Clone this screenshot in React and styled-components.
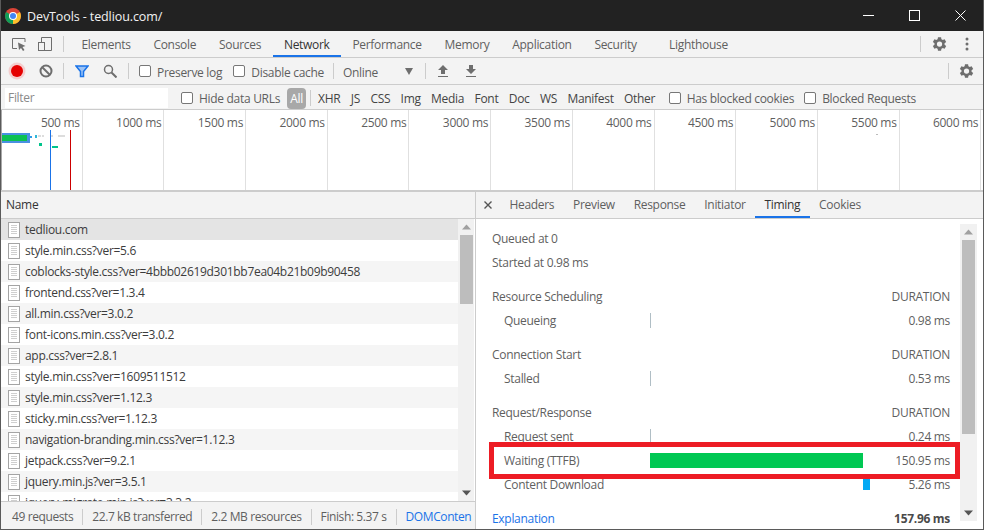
import React from 'react';
import styled, { createGlobalStyle } from 'styled-components';

const GlobalStyle = createGlobalStyle`
  html, body {
    margin: 0;
    padding: 0;
    background: #fff;
  }
  * {
    box-sizing: border-box;
  }
`;

const Win = styled.div`
  position: relative;
  width: 984px;
  height: 530px;
  overflow: hidden;
  display: flex;
  flex-direction: column;
  background: #f3f3f3;
  border: 1px solid #5a5a5a;
  border-top: none;
  font-family: "Open Sans", "Noto Sans", sans-serif;
  font-size: 12px;
  letter-spacing: -0.3px;
  color: #5f5f5f;
`;

const TitleBar = styled.div`
  height: 31px;
  flex: none;
  margin: 0 -1px;
  padding: 0 1px 0 5px;
  display: flex;
  align-items: center;
  background: #222;
  color: #f2f2f2;
  font-size: 12.5px;
  letter-spacing: -0.1px;
`;

const TitleText = styled.span`
  margin-left: 6px;
  padding-top: 2px;
  flex: 1;
`;

const WinBtn = styled.button`
  width: 46px;
  height: 31px;
  padding: 0;
  border: none;
  background: none;
  display: flex;
  align-items: center;
  justify-content: center;
`;

const Bar = styled.div`
  height: ${p => p.$h}px;
  padding-top: ${p => p.$pt || 0}px;
  flex: none;
  display: flex;
  align-items: center;
  border-bottom: 1px solid #ccc;
  background: #f3f3f3;
`;

const Sep = styled.div`
  width: 1px;
  height: 16px;
  flex: none;
  margin: 0 ${p => p.$r || 0}px 0 ${p => p.$l || 0}px;
  background: #ccc;
`;

const IconBtn = styled.span`
  width: ${p => p.$w || 26}px;
  height: 26px;
  flex: none;
  display: flex;
  align-items: center;
  justify-content: center;
`;

const Tab = styled.div`
  height: 26px;
  padding: 0 ${p => p.$px}px;
  margin-left: ${p => p.$ml || 0}px;
  line-height: ${p => p.$lh}px;
  white-space: nowrap;
  box-shadow: ${p => (p.$active ? 'inset 0 -2px 0 #1a73e8' : 'none')};
  color: ${p => (p.$active ? '#333' : '#5f5f5f')};
`;

const Spring = styled.div`
  flex: 1;
`;

const EndGap = styled.div`
  width: 6px;
  flex: none;
`;

const Check = styled.label`
  display: flex;
  align-items: center;
  gap: 6px;
  white-space: nowrap;
  margin-left: ${p => p.$ml || 0}px;
`;

const CheckText = styled.span`
  padding-top: ${p => (p.$low ? 2 : 0)}px;
`;

const Box = styled.span`
  width: 12px;
  height: 12px;
  flex: none;
  border: 1px solid #777;
  border-radius: 2px;
  background: #fff;
`;

const ThrottleText = styled.span`
  width: 62px;
  padding-top: 2px;
`;

const FilterInput = styled.div`
  width: 163px;
  height: 20px;
  margin-left: 4px;
  padding-left: 3px;
  line-height: 20px;
  background: #fff;
  color: #8a8a8a;
`;

const AllPill = styled.span`
  width: 19px;
  height: 21px;
  margin-left: 7px;
  border-radius: 4px;
  background: #a8a8a8;
  color: #fff;
  line-height: 21px;
  text-align: center;
`;

const TypeList = styled.div`
  display: flex;
  gap: 10.4px;
  margin-left: 3px;
  white-space: nowrap;
  color: #444;
`;

const Overview = styled.div`
  position: relative;
  height: 80px;
  flex: none;
  display: grid;
  grid-template-columns: repeat(12, 81.7px);
  background: #fff;
`;

const Tick = styled.div`
  padding: 4px 2px 0 0;
  text-align: right;
  white-space: nowrap;
  border-right: 1px solid #e0e0e0;
`;

const OverviewMarks = styled.svg`
  position: absolute;
  left: 0;
  top: 0;
`;

const Split = styled.div`
  flex: 1;
  min-height: 0;
  display: flex;
  border-top: 2px solid #ccc;
`;

const ListPane = styled.div`
  width: 475px;
  flex: none;
  display: flex;
  flex-direction: column;
  border-right: 1px solid #ccc;
`;

const NameHead = styled.div`
  height: 27px;
  flex: none;
  padding-left: 5px;
  line-height: 26px;
  color: #333;
  border-bottom: 1px solid #ccc;
`;

const ListBody = styled.div`
  flex: 1;
  min-height: 0;
  display: flex;
  overflow: hidden;
  background: #fff;
  padding-right: 1px;
`;

const Rows = styled.div`
  flex: 1;
  min-width: 0;
  overflow: hidden;
`;

const Row = styled.div`
  height: 21px;
  display: flex;
  align-items: center;
  gap: 5px;
  padding-left: 7px;
  color: #3c3c3c;
  background: ${p => (p.$selected ? '#e4e4e4' : p.$odd ? '#f5f5f5' : '#fff')};
  white-space: nowrap;
`;

const Track = styled.div`
  width: ${p => (p.$inset ? 17 : 16)}px;
  flex: none;
  margin: ${p => (p.$inset ? '5px 0 8px' : '0')};
  display: flex;
  flex-direction: column;
  align-items: center;
  background: #f1f1f1;
`;

const ArrowBox = styled.div`
  height: 16px;
  flex: none;
  display: flex;
  align-items: center;
  justify-content: center;
`;

const Thumb = styled.div`
  width: 13px;
  flex: none;
  height: ${p => p.$h}px;
  background: #bdbdbd;
`;

const TrackGap = styled.div`
  flex: 1;
`;

const StatusBar = styled.div`
  height: 28px;
  flex: none;
  padding: 2px 0 0 2px;
  display: flex;
  align-items: center;
  border-top: 1px solid #ccc;
  white-space: nowrap;
  overflow: hidden;
  letter-spacing: -0.4px;
`;

const StatusItem = styled.span`
  padding: 0 9px;
  border-right: ${p => (p.$link ? 'none' : '1px solid #ccc')};
  color: ${p => (p.$link ? '#1a73e8' : '#5f5f5f')};
  line-height: 16px;
`;

const DetailPane = styled.div`
  flex: 1;
  min-width: 0;
  display: flex;
  flex-direction: column;
`;

const DetailTabs = styled.div`
  height: 27px;
  flex: none;
  display: flex;
  align-items: center;
  border-bottom: 1px solid #ccc;
`;

const DetailBody = styled.div`
  flex: 1;
  min-height: 0;
  display: flex;
  background: #fff;
  padding-right: 6px;
`;

const TimingPane = styled.div`
  flex: 1;
  min-width: 0;
  padding: 7px 10px 0 16px;
  overflow: hidden;
`;

const Line = styled.div`
  height: 24px;
  margin-top: ${p => p.$mt || 0}px;
  display: flex;
  align-items: center;
  white-space: nowrap;
`;

const Label = styled.span`
  flex: 1;
  color: ${p => p.$color || 'inherit'};
`;

const Total = styled.strong`
  color: #4a4a4a;
`;

const Grid = styled.div`
  height: 24px;
  display: grid;
  grid-template-columns: 158px 1fr 80px;
  align-items: center;
  white-space: nowrap;
`;

const RowName = styled.span`
  padding-left: 12px;
`;

const Ms = styled.span`
  text-align: right;
`;

const BarCell = styled.div`
  height: ${p => p.$h || 15}px;
  display: flex;
`;

const Segment = styled.div`
  height: 100%;
  width: ${p => p.$w}px;
  margin-left: ${p => p.$ml || 0}px;
  background: ${p => p.$c};
`;

const Highlight = styled.div`
  position: absolute;
  left: 488px;
  top: 442px;
  width: 471px;
  height: 37px;
  border: 5px solid #ed1c24;
`;

const ChromeLogo = () => (
  <svg width="16" height="16" viewBox="0 0 16 16">
    <circle cx="8" cy="8" r="8" fill="#db4437" />
    <path d="M8 8 L14.9 4 A8 8 0 0 1 8 16 Z" fill="#fbc02d" />
    <path d="M8 8 L8 16 A8 8 0 0 1 1.1 4 Z" fill="#0f9d58" />
    <circle cx="8" cy="8" r="4" fill="#fff" />
    <circle cx="8" cy="8" r="3" fill="#4285f4" />
  </svg>
);

const Gear = () => (
  <svg width="18" height="18" viewBox="0 0 24 24" fill="#6e6e6e">
    <path d="M19.4 13a7.6 7.6 0 0 0 0-2l2.2-1.7-2.1-3.6-2.6 1a7.6 7.6 0 0 0-1.7-1L14.8 3h-4.2l-.4 2.7a7.6 7.6 0 0 0-1.700 1l-2.600-1-2.100 3.600L6 11a7.600 7.600 0 0 0 0 2l-2.200 1.700 2.100 3.600 2.600-1c.5.400 1.100.700 1.700 1l.4 2.700h4.200l.4-2.700c.600-.300 1.200-.600 1.700-1l2.600 1 2.100-3.600zM12.700 15.500a3.500 3.500 0 1 1 0-7 3.500 3.500 0 0 1 0 7z" />
  </svg>
);

const FileIcon = () => (
  <svg width="12" height="16" viewBox="0 0 12 16" style={{ flex: 'none' }}>
    <rect x="0.5" y="0.5" width="11" height="15" fill="#fff" stroke="#a4a4a4" />
    <path d="M3 3.500h6M3 5.500h6M3 7.500h6M3 9.500h6M3 11.500h6" stroke="#cfcfcf" />
  </svg>
);

const ArrowUp = () => (
  <svg width="9" height="6" viewBox="0 0 9 6"><path d="M4.500 0.500 L9 5.500 H0 Z" fill="#a0a0a0" /></svg>
);
const ArrowDown = () => (
  <svg width="9" height="6" viewBox="0 0 9 6"><path d="M0 0.500 H9 L4.500 5.500 Z" fill="#555" /></svg>
);

const tabs = ['Elements', 'Console', 'Sources', 'Network', 'Performance', 'Memory', 'Application', 'Security'];
const types = ['XHR', 'JS', 'CSS', 'Img', 'Media', 'Font', 'Doc', 'WS', 'Manifest', 'Other'];
const ticks = ['500', '1000', '1500', '2000', '2500', '3000', '3500', '4000', '4500', '5000', '5500', '6000'];

const files = [
  'tedliou.com',
  'style.min.css?ver=5.6',
  'coblocks-style.css?ver=4bbb02619d301bb7ea04b21b09b90458',
  'frontend.css?ver=1.3.4',
  'all.min.css?ver=3.0.2',
  'font-icons.min.css?ver=3.0.2',
  'app.css?ver=2.8.1',
  'style.min.css?ver=1609511512',
  'style.min.css?ver=1.12.3',
  'sticky.min.css?ver=1.12.3',
  'navigation-branding.min.css?ver=1.12.3',
  'jetpack.css?ver=9.2.1',
  'jquery.min.js?ver=3.5.1',
  'jquery-migrate.min.js?ver=3.3.2',
];

const detailTabs = ['Headers', 'Preview', 'Response', 'Initiator', 'Timing', 'Cookies'];

export default function App() {
  return (
    <>
      <GlobalStyle />
      <Win>
        <TitleBar>
          <ChromeLogo />
          <TitleText>DevTools - tedliou.com/</TitleText>
          <WinBtn>
            <svg width="11" height="11" viewBox="0 0 11 11"><path d="M0 5.500H11" stroke="#fff" /></svg>
          </WinBtn>
          <WinBtn>
            <svg width="11" height="11" viewBox="0 0 11 11"><rect x="0.500" y="0.500" width="10" height="10" fill="none" stroke="#fff" /></svg>
          </WinBtn>
          <WinBtn>
            <svg width="11" height="11" viewBox="0 0 11 11"><path d="M0.500 0.500L10.500 10.500M10.500 0.500L0.500 10.500" stroke="#fff" /></svg>
          </WinBtn>
        </TitleBar>

        <Bar $h={27}>
          <IconBtn $w={35}>
            <svg width="16" height="16" viewBox="0 0 16 16" fill="none">
              <path d="M6 12.500H1.500V2.500H14V6" stroke="#6e6e6e" />
              <path d="M7 6.500L14.500 10L11.500 11L13.500 14L12 15L10 12L8 14Z" fill="#6e6e6e" />
            </svg>
          </IconBtn>
          <IconBtn $w={17}>
            <svg width="16" height="16" viewBox="0 0 16 16" fill="none" stroke="#6e6e6e">
              <path d="M4.500 6V1.500H14.500V14.500H8" />
              <rect x="1.500" y="6.500" width="6" height="8" />
            </svg>
          </IconBtn>
          <Sep $l={10} $r={6} />
          {tabs.map(t => (
            <Tab key={t} $px={11.4} $lh={28} $active={t === 'Network'}>{t}</Tab>
          ))}
          <Tab $px={12} $lh={28} $ml={9}>Lighthouse</Tab>
          <Spring />
          <Sep />
          <IconBtn $w={36}><Gear /></IconBtn>
          <IconBtn $w={20}>
            <svg width="4" height="14" viewBox="0 0 4 14" fill="#6e6e6e">
              <circle cx="2" cy="2" r="1.500" /><circle cx="2" cy="7" r="1.500" /><circle cx="2" cy="12" r="1.500" />
            </svg>
          </IconBtn>
          <EndGap />
        </Bar>

        <Bar $h={27}>
          <IconBtn $w={32}>
            <svg width="18" height="18" viewBox="0 0 18 18">
              <circle cx="9" cy="9" r="8.500" fill="#f5b5b5" opacity="0.6" />
              <circle cx="9" cy="9" r="6" fill="#e50000" />
            </svg>
          </IconBtn>
          <IconBtn $w={25}>
            <svg width="14" height="14" viewBox="0 0 14 14" fill="none" stroke="#6e6e6e" strokeWidth="2">
              <circle cx="7" cy="7" r="5.500" /><path d="M3 3L11 11" />
            </svg>
          </IconBtn>
          <Sep $l={5} $r={5} />
          <IconBtn $w={26}>
            <svg width="14" height="13" viewBox="0 0 14 13" fill="none" stroke="#1a73e8" strokeWidth="1.500">
              <path d="M1 1H13L8.500 6.500V11.500H5.500V6.500Z" fill="#9cc3f5" />
            </svg>
          </IconBtn>
          <IconBtn $w={30}>
            <svg width="14" height="14" viewBox="0 0 14 14" fill="none" stroke="#6e6e6e" strokeWidth="1.500">
              <circle cx="5.500" cy="5.500" r="4" /><path d="M8.500 8.500L13.500 13.500" strokeWidth="2" />
            </svg>
          </IconBtn>
          <Sep $l={3} />
          <Check $ml={10}><Box /><CheckText $low>Preserve log</CheckText></Check>
          <Check $ml={11}><Box /><CheckText $low>Disable cache</CheckText></Check>
          <Sep $l={9} $r={9} />
          <ThrottleText>Online</ThrottleText>
          <svg width="8" height="7" viewBox="0 0 8 7"><path d="M0 0H8L4 7Z" fill="#6e6e6e" /></svg>
          <Sep $l={12} />
          <IconBtn $w={35}>
            <svg width="12" height="14" viewBox="0 0 12 14" fill="#6e6e6e">
              <path d="M6 1L11 6H8V10H4V6H1ZM1 12H11V13H1Z" />
            </svg>
          </IconBtn>
          <IconBtn $w={20}>
            <svg width="12" height="14" viewBox="0 0 12 14" fill="#6e6e6e">
              <path d="M4 1H8V5H11L6 10L1 5H4ZM1 12H11V13H1Z" />
            </svg>
          </IconBtn>
          <Spring />
          <Sep />
          <IconBtn $w={34}><Gear /></IconBtn>
        </Bar>

        <Bar $h={25} $pt={2}>
          <FilterInput>Filter</FilterInput>
          <Check $ml={13}><Box /><CheckText>Hide data URLs</CheckText></Check>
          <AllPill>All</AllPill>
          <Sep $l={4} $r={4} />
          <TypeList>
            {types.map(t => <span key={t}>{t}</span>)}
          </TypeList>
          <Check $ml={13.5}><Box /><CheckText>Has blocked cookies</CheckText></Check>
          <Check $ml={10}><Box /><CheckText>Blocked Requests</CheckText></Check>
        </Bar>

        <Overview>
          {ticks.map(t => <Tick key={t}>{t} ms</Tick>)}
          <OverviewMarks width="982" height="80" viewBox="0 0 982 80">
            <rect x="0" y="0" width="1" height="80" fill="#a8a8a8" />
            <rect x="1" y="23" width="28" height="10" fill="#4a90e2" />
            <rect x="1" y="25" width="25" height="6" fill="#0cc152" />
            <rect x="29" y="26" width="2" height="2" fill="#2f9be8" />
            <rect x="34" y="25" width="2" height="3" fill="#2fb8d8" />
            <rect x="37" y="25" width="3" height="2" fill="#ddd" />
            <rect x="41" y="25" width="2" height="2" fill="#ddd" />
            <rect x="50" y="25" width="2" height="2" fill="#ddd" />
            <rect x="57" y="25" width="7" height="2" fill="#ddd" />
            <rect x="38" y="33" width="3" height="3" fill="#00c48c" />
            <rect x="51" y="36" width="6" height="2" fill="#00c48c" />
            <rect x="875" y="24" width="2" height="1" fill="#bbb" />
            <rect x="49" y="20" width="1" height="60" fill="#1a73e8" />
            <rect x="69" y="20" width="1" height="60" fill="#c00" />
          </OverviewMarks>
        </Overview>

        <Split>
          <ListPane>
            <NameHead>Name</NameHead>
            <ListBody>
              <Rows>
                {files.map((f, i) => (
                  <Row key={f + i} $selected={i === 0} $odd={i % 2 === 0}>
                    <FileIcon />
                    {f}
                  </Row>
                ))}
              </Rows>
              <Track>
                <ArrowBox><ArrowUp /></ArrowBox>
                <Thumb $h={69} />
                <TrackGap />
                <ArrowBox><ArrowDown /></ArrowBox>
              </Track>
            </ListBody>
            <StatusBar>
              <StatusItem>49 requests</StatusItem>
              <StatusItem>22.7 kB transferred</StatusItem>
              <StatusItem>2.2 MB resources</StatusItem>
              <StatusItem>Finish: 5.37 s</StatusItem>
              <StatusItem $link>DOMConten</StatusItem>
            </StatusBar>
          </ListPane>

          <DetailPane>
            <DetailTabs>
              <IconBtn $w={24}>
                <svg width="8" height="8" viewBox="0 0 8 8"><path d="M0.500 0.500L7.500 7.500M7.500 0.500L0.500 7.500" stroke="#555" strokeWidth="1.400" /></svg>
              </IconBtn>
              {detailTabs.map(t => (
                <Tab key={t} $px={9.4} $lh={25} $active={t === 'Timing'}>{t}</Tab>
              ))}
            </DetailTabs>
            <DetailBody>
              <TimingPane>
                <Line>Queued at 0</Line>
                <Line>Started at 0.98 ms</Line>
                <Line $mt={10}><Label>Resource Scheduling</Label><span>DURATION</span></Line>
                <Grid><RowName>Queueing</RowName><BarCell><Segment $w={1} $c="#b0bec5" /></BarCell><Ms>0.98 ms</Ms></Grid>
                <Line $mt={10}><Label>Connection Start</Label><span>DURATION</span></Line>
                <Grid><RowName>Stalled</RowName><BarCell><Segment $w={1} $c="#b0bec5" /></BarCell><Ms>0.53 ms</Ms></Grid>
                <Line $mt={10}><Label>Request/Response</Label><span>DURATION</span></Line>
                <Grid><RowName>Request sent</RowName><BarCell><Segment $w={1} $c="#b0bec5" /></BarCell><Ms>0.24 ms</Ms></Grid>
                <Grid><RowName>Waiting (TTFB)</RowName><BarCell><Segment $w={213} $c="#00c853" /></BarCell><Ms>150.95 ms</Ms></Grid>
                <Grid><RowName>Content Download</RowName><BarCell $h={12}><Segment $w={7} $ml={213} $c="#03a9f4" /></BarCell><Ms>5.26 ms</Ms></Grid>
                <Line $mt={10}>
                  <Label $color="#1a73e8">Explanation</Label>
                  <Total>157.96 ms</Total>
                </Line>
              </TimingPane>
              <Track $inset>
                <ArrowBox><ArrowUp /></ArrowBox>
                <Thumb $h={194} />
                <TrackGap />
                <ArrowBox><ArrowDown /></ArrowBox>
              </Track>
            </DetailBody>
          </DetailPane>
        </Split>
        <Highlight />
      </Win>
    </>
  );
}
